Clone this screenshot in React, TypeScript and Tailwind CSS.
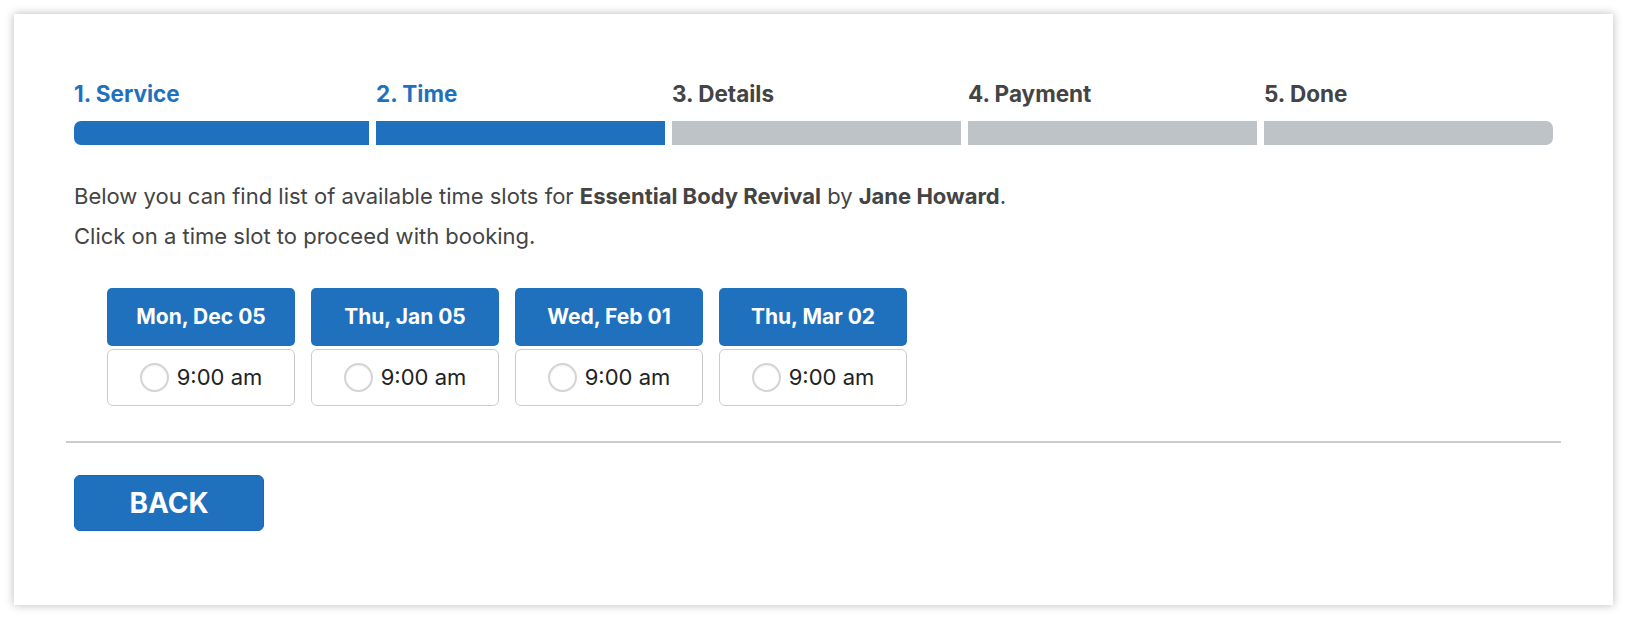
const STEPS = [
  { label: "1. Service", done: true },
  { label: "2. Time", done: true },
  { label: "3. Details", done: false },
  { label: "4. Payment", done: false },
  { label: "5. Done", done: false },
];

const SLOTS = [
  { day: "Mon, Dec 05", time: "9:00 am" },
  { day: "Thu, Jan 05", time: "9:00 am" },
  { day: "Wed, Feb 01", time: "9:00 am" },
  { day: "Thu, Mar 02", time: "9:00 am" },
];

export default function App() {
  return (
    <div className="min-h-[620px] bg-white p-[14px] font-['Inter',sans-serif]">
      <div className="h-[591px] w-[1599px] bg-white px-[60px] pt-[66px] shadow-[0_0_9px_rgba(0,0,0,0.28)]">
        {/* Progress steps */}
        <div className="grid grid-cols-[295px_1fr_1fr_1fr_1fr] gap-x-[7px]">
          {STEPS.map((s, i) => (
            <div key={s.label} className="flex flex-col">
              <span
                className={
                  s.done
                    ? "text-[22.5px] font-bold leading-[28px] text-[#1f71bd]"
                    : "text-[22.5px] font-bold leading-[28px] text-[#444444]"
                }
              >
                {s.label}
              </span>
              <div
                className={[
                  "mt-[13px] h-[24px]",
                  s.done ? "bg-[#1f71bd]" : "bg-[#bdc3c7]",
                  i === 0 ? "rounded-l-[7px]" : "",
                  i === 4 ? "rounded-r-[7px]" : "",
                ].join(" ")}
              />
            </div>
          ))}
        </div>

        {/* Info text */}
        <div className="mt-[31px] text-[22px] leading-[40px] text-[#444444]">
          <p>
            Below you can find list of available time slots for{" "}
            <b>Essential Body Revival</b> by <b>Jane Howard</b>.
          </p>
          <p>Click on a time slot to proceed with booking.</p>
        </div>

        {/* Time slots */}
        <div className="ml-[33px] mt-[32px] flex gap-[16px]">
          {SLOTS.map((s) => (
            <div key={s.day} className="flex w-[188px] flex-col gap-[3px]">
              <div className="flex h-[58px] items-center justify-center rounded-[5px] bg-[#1f71bd] text-[21px] font-bold text-white">
                {s.day}
              </div>
              <button
                type="button"
                className="flex h-[57px] items-center justify-center gap-[8px] rounded-[6px] border-[1.5px] border-[#cccccc] bg-white"
              >
                <span className="h-[29px] w-[29px] rounded-full border-[2px] border-[#d4d4d4] bg-white shadow-[inset_0_1px_2px_rgba(0,0,0,0.06)]" />
                <span className="text-[22px] text-[#222222]">{s.time}</span>
              </button>
            </div>
          ))}
        </div>

        {/* Divider */}
        <div className="-mx-[8px] mt-[35px] h-[2px] bg-[#cccccc]" />

        {/* Back */}
        <button
          type="button"
          className="mt-[32px] flex h-[56px] w-[190px] items-center justify-center rounded-[6px] border border-[#1a66b0] bg-[#1f71bd] text-[28px] font-bold text-white"
        >
          BACK
        </button>
      </div>
    </div>
  );
}
